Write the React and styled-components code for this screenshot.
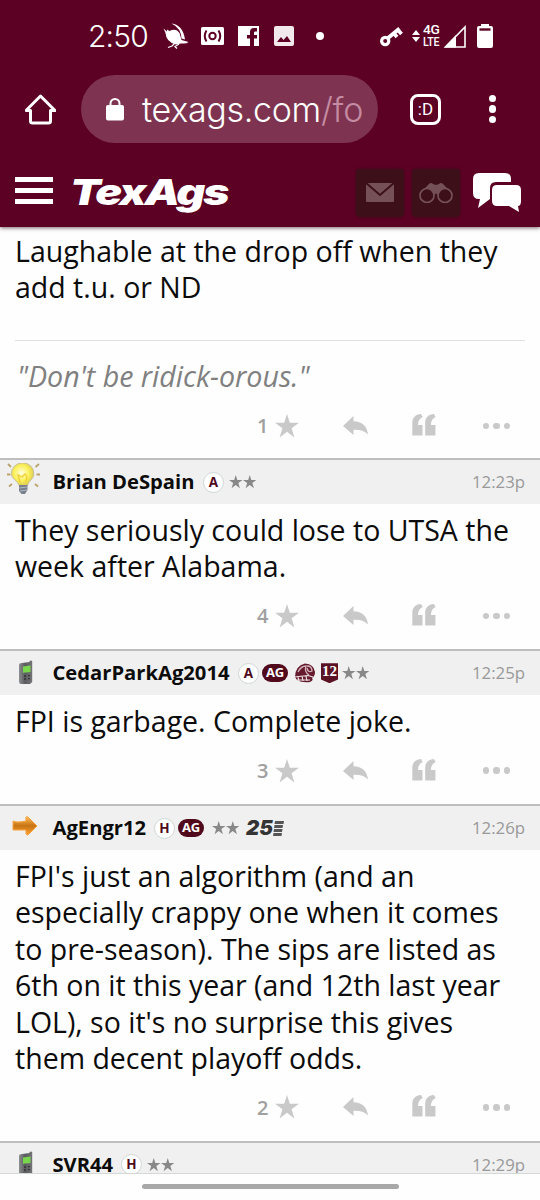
import React from "react";
import styled, { createGlobalStyle } from "styled-components";

const Global = createGlobalStyle`
  * { box-sizing: border-box; }
  html, body { margin: 0; padding: 0; background: #fff; overflow: hidden; }
  svg { display: block; flex: none; }
`;

const Screen = styled.div`
  width: 540px;
  height: 1200px;
  overflow: hidden;
  display: flex;
  flex-direction: column;
  background: #fefefe;
  color: #0c0c0c;
  font-family: "Open Sans", sans-serif;
`;

const Top = styled.header`
  flex: none;
  height: 227px;
  background: #5c0024;
  color: #fff;
  box-shadow: 0 1px 4px rgba(30, 0, 10, 0.6);
  z-index: 1;
`;

const StatusBar = styled.div`
  height: 72px;
  padding: 0 40px 0 88px;
  display: flex;
  align-items: center;
`;

const Clock = styled.span`
  width: 61px;
  font: 300 30px/36px Inter, "Liberation Sans", sans-serif;
  letter-spacing: -0.8px;
  white-space: nowrap;
`;

const StatusIcon = styled.span`
  display: flex;
  flex: none;
  margin-left: ${(p) => p.$gap}px;
`;

const Network = styled.span`
  margin-left: 3px;
  width: 18px;
  display: flex;
  flex-direction: column;
`;

const NetworkLine = styled.span`
  font: 500 13px/12px Roboto, sans-serif;
  letter-spacing: -0.3px;
  transform: scaleX(${(p) => p.$stretch});
  transform-origin: left;
`;

const UrlBar = styled.div`
  height: 74px;
  padding: 0 40px 0 25px;
  display: flex;
  align-items: center;
`;

const Address = styled.div`
  width: 297px;
  height: 68px;
  margin: 0 32px 0 25px;
  padding-left: 25px;
  border-radius: 34px;
  background: #7e3450;
  display: flex;
  align-items: center;
`;

const Url = styled.span`
  margin-left: 18px;
  padding-top: 1px;
  font: 300 34px/44px Inter, "Liberation Sans", sans-serif;
  letter-spacing: -0.3px;
  white-space: nowrap;
`;

const Path = styled.span`
  color: #c58ba2;
`;

const Tabs = styled.div`
  width: 31px;
  height: 31px;
  border: 3px solid #fff;
  border-radius: 8px;
  display: flex;
  align-items: center;
  justify-content: center;
  font: 400 17px/20px Roboto, sans-serif;
`;

const Kebab = styled.div`
  margin-left: auto;
  width: 15px;
  display: flex;
  flex-direction: column;
  align-items: center;
  gap: 3px;
`;

const Dot = styled.i`
  display: block;
  width: ${(p) => p.$size}px;
  height: ${(p) => p.$size}px;
  border-radius: 50%;
  background: ${(p) => p.$color || "#fff"};
`;

const SiteNav = styled.nav`
  height: 81px;
  padding: 12px 0 0 15px;
  display: flex;
  align-items: center;
`;

const Burger = styled.div`
  flex: none;
  width: 38px;
  height: 27px;
  border-top: 5px solid #fff;
  border-bottom: 5px solid #fff;
  display: flex;
  align-items: center;
  margin-bottom: 5px;
  &::after {
    content: "";
    width: 100%;
    height: 5px;
    background: #fff;
  }
`;

const Logo = styled.div`
  flex: none;
  width: 158px;
  margin: 0 128px 0 17px;
  font: italic 900 35.5px/40px Inter, sans-serif;
  letter-spacing: -1.6px;
  transform: scaleX(1.26);
  transform-origin: left;
  white-space: nowrap;
`;

const NavTile = styled.div`
  flex: none;
  width: 48px;
  height: 48px;
  margin-right: 8px;
  border-radius: 4px;
  background: #3c0f19;
  box-shadow: 0 0 3px #3c0f19;
  color: #755157;
  display: flex;
  align-items: center;
  justify-content: center;
`;

const Feed = styled.main`
  flex: 1;
  min-height: 0;
  overflow: hidden;
  border-bottom: 1px solid #d4d8d6;
`;

const Bar = styled.div`
  height: 46px;
  border-top: 2px solid #bebebe;
  background: #f0f0f0;
  padding: 0 15px 1px 0;
  display: flex;
  align-items: center;
`;

const Avatar = styled.div`
  width: 52.5px;
  height: 43px;
  padding: ${(p) => p.$top}px 0 0 ${(p) => p.$left}px;
`;

const Name = styled.span`
  width: ${(p) => p.$w}px;
  padding-bottom: 1px;
  font-size: 20.2px;
  line-height: 28px;
  font-weight: 700;
  white-space: nowrap;
`;

const Badges = styled.div`
  flex: 1;
  padding: 1px 0 0 8.5px;
  display: flex;
  align-items: center;
`;

const Circle = styled.span`
  width: 21px;
  height: 21px;
  border-radius: 50%;
  border: 1px solid #d0d6d6;
  background: #fff;
  color: #4e0a1b;
  font: 700 13.5px/18px "Open Sans", sans-serif;
  text-align: center;
`;

const Pill = styled.span`
  width: 26px;
  height: 18px;
  margin-left: 3px;
  border-radius: 9px;
  background: #500a1c;
  color: #fff;
  font: 700 13px/17.5px "Open Sans", sans-serif;
  letter-spacing: -0.3px;
  text-align: center;
`;

const Spaced = styled.span`
  display: flex;
  margin-left: ${(p) => p.$gap}px;
`;

const Time = styled.span`
  font-size: 16.8px;
  color: #999;
`;

const Body = styled.p`
  margin: 0;
  padding: ${(p) => p.$top}px 0 0 15px;
  font-size: 28.5px;
  line-height: 36.4px;
  white-space: pre;
`;

const Signature = styled.div`
  margin: 34px 15px 0;
  padding: 16.5px 0 0 2px;
  border-top: 1px solid #e0e0e0;
  font-size: 28.6px;
  line-height: 38px;
  font-style: italic;
  color: #808080;
`;

const Actions = styled.div`
  height: ${(p) => p.$h}px;
  padding: ${(p) => p.$top}px 30px 0 0;
  display: flex;
  align-items: flex-start;
  justify-content: flex-end;
  gap: 44px;
  color: #c9c9c9;
`;

const Rating = styled.span`
  display: flex;
  align-items: center;
  gap: 6px;
  height: 26px;
  font-size: 20px;
  font-weight: 600;
  color: #a0a0a0;
`;

const Dots = styled.span`
  height: 26px;
  margin-left: 3px;
  display: flex;
  align-items: center;
  gap: 4px;
`;

const HomeIndicator = styled.footer`
  flex: none;
  height: 26px;
  display: flex;
  justify-content: center;
  padding-top: 10px;
  &::after {
    content: "";
    width: 257px;
    height: 5px;
    border-radius: 3px;
    background: #a8a8a8;
  }
`;

const starPath = "M12 0L14.8 8.8H24L16.6 14.2L19.4 23.4L12 17.8L4.6 23.4L7.4 14.2L0 8.8H9.2Z";
const Star = ({ size = 24, color = "#c9c9c9" }) => (
  <svg width={size} height={size} viewBox="0 0 24 24" fill={color}><path d={starPath} /></svg>
);
const Stars = ({ gap }) => (
  <Spaced $gap={gap}><Star size={13.5} color="#888" /><Star size={13.5} color="#888" /></Spaced>
);

const ReplyIcon = () => (
  <svg width="25" height="26" viewBox="0 0 25 26" fill="currentColor">
    <path d="M0 13L10.5 3V8.3C19 8.6 24 13 25 21.5C21.2 17.6 16.5 16.5 10.5 16.8V22Z" />
  </svg>
);
const QuoteIcon = () => (
  <svg width="24" height="26" viewBox="0 0 24 26" fill="currentColor">
    <path d="M.3 22.5V10C.3 4.5 3.5 1.5 9 1L10.7 4C7.7 5.5 6 8 6 12H10.5V22.5Z" />
    <path d="M13.2 22.5V10C13.2 4.5 16.4 1.5 21.9 1L23.6 4C20.6 5.5 18.9 8 18.9 12H23.4V22.5Z" />
  </svg>
);

const PostActions = ({ count, top = 18, h = 64.4 }) => (
  <Actions $top={top} $h={h}>
    <Rating>{count}<Star /></Rating>
    <ReplyIcon />
    <QuoteIcon />
    <Dots><Dot $size={6.5} $color="#c9c9c9" /><Dot $size={6.5} $color="#c9c9c9" /><Dot $size={6.5} $color="#c9c9c9" /></Dots>
  </Actions>
);

const Bulb = () => (
  <svg width="34" height="32" viewBox="0 0 34 32">
    <defs>
      <radialGradient id="glow" cx=".45" cy=".45" r=".6">
        <stop offset="0" stopColor="#fffde0" /><stop offset=".55" stopColor="#fbf15c" /><stop offset="1" stopColor="#d9c44e" />
      </radialGradient>
    </defs>
    <path d="M1 1L4 4M32 1L28.5 4M0 11.5H3.5M29.5 11.5H33M2 23.5L5 21M31 23.5L28 21" stroke="#b9a46c" strokeWidth="1.8" />
    <path d="M4.5 11A11.2 10.2 0 1 1 26.8 11C26.8 16 21.5 18 20.5 22.5H12C11 18 4.5 16 4.5 11Z" fill="url(#glow)" stroke="#c8c19b" />
    <path d="M13 19L11 12L15 14L18 11L20 14L18.5 19" stroke="#f0ce32" fill="none" strokeWidth="1.3" />
    <path d="M12 22H20.5V27L18 31H14.5L12 28Z" fill="#77808c" />
    <path d="M12 25L20 24M13 28L20 27" stroke="#aeb6bf" />
  </svg>
);
const Phone = () => (
  <svg width="16" height="25" viewBox="0 0 16 25">
    <defs><linearGradient id="case"><stop stopColor="#8d9091" /><stop offset=".45" stopColor="#5a5b5e" /><stop offset="1" stopColor="#747476" /></linearGradient></defs>
    <path d="M11.5 1Q13 0 14.2 1V22L12 24H3Q1 24 1 21V5Q1 3 4 3L11.5 2Z" fill="url(#case)" />
    <path d="M5 6.5L12.5 5.5V12L5 12.8Z" fill="#78d74d" />
    <path d="M6 16H8M10 15.7H12M6 19H8M10 18.7H12" stroke="#343437" strokeWidth="1.3" />
  </svg>
);
const Arrow = () => (
  <svg width="26" height="22" viewBox="0 0 26 22">
    <defs><linearGradient id="orange" x2="0" y2="1"><stop stopColor="#ffbd57" /><stop offset=".5" stopColor="#c77414" /><stop offset="1" stopColor="#ffa333" /></linearGradient></defs>
    <path d="M1 6Q4 8 14 6V2Q15 1 17 3L25 11L17 19Q15 21 14 19V15H1Z" fill="url(#orange)" stroke="#f4a13e" />
  </svg>
);
const Helmet = () => (
  <svg width="21" height="20" viewBox="0 0 21 20">
    <path d="M1 14Q1 3 11 .5Q20 1 21 9Q21 13 18 15Q20 17 16 19Q8 20 3 17Z" fill="#651b2d" />
    <path d="M4 9Q7 3 12 3Q10 9 15 12M13 3Q18 3 18 8Q14 10 13 5" stroke="#d5b5bc" fill="none" strokeWidth="1.3" />
    <path d="M0 14L14 12.5L19 14M4 14L5 18M8 13L9 18M12 13L13 18M3 17H16" stroke="#eee2e4" fill="none" strokeWidth="1.2" />
  </svg>
);
const ShieldFrame = styled.span`
  width: 17px;
  height: 20px;
  margin-left: 6px;
  background: #5c1225;
  clip-path: polygon(0 0, 100% 0, 100% 82%, 50% 100%, 0 82%);
  color: #fff;
  font: 700 15px/17px "Liberation Serif", serif;
  text-align: center;
`;
const Anniversary = styled.span`
  display: flex;
  align-items: center;
  margin-left: 7px;
  color: #343434;
  font: italic 900 20.5px/20px Inter, sans-serif;
`;

const PostBar = ({ avatar, left, top, name, w, time, children }) => (
  <Bar>
    <Avatar $left={left} $top={top}>{avatar}</Avatar>
    <Name $w={w}>{name}</Name>
    <Badges>{children}</Badges>
    <Time>{time}</Time>
  </Bar>
);

export default function App() {
  return (
    <Screen>
      <Global />
      <Top>
        <StatusBar>
          <Clock>2:50</Clock>
          <StatusIcon $gap={14}>
            <svg width="27" height="27" viewBox="0 0 27 27" fill="#fff">
              <path d="M.5 5.500L4 8.500L4 6.500L6.500 8Q13 4.500 16.500 10L18.500 17L25.500 19Q24 21 18 20.500L13 21.500Q3 19 2.500 10Z" />
              <path d="M8.500 .5Q20 2 22 16.500L18.500 15.500Q18 5 8.500 .5Z" />
              <path d="M12 20L9 23L5 24.500M16 21L12 23.500L14 25.500" stroke="#fff" strokeWidth="1.3" fill="none" />
            </svg>
          </StatusIcon>
          <StatusIcon $gap={11}>
            <svg width="23" height="18" viewBox="0 0 23 18">
              <rect width="23" height="18" rx="1.5" fill="#fff" />
              <g stroke="#5c0024" fill="none" strokeWidth="2"><circle cx="11.5" cy="9" r="3.2" /><path d="M5.5 3.5Q2 9 5.5 14.5M17.5 3.5Q21 9 17.5 14.5" /></g>
            </svg>
          </StatusIcon>
          <StatusIcon $gap={14}>
            <svg width="21" height="20" viewBox="0 0 21 20">
              <path fill="#fff" d="M0 0H21V20H16V12.5H19V9H16V6.8Q16 5.5 17.5 5.5H19V2H16Q12 2 12 6V9H9V12.5H12V20H0Z" />
            </svg>
          </StatusIcon>
          <StatusIcon $gap={15}>
            <svg width="20" height="20" viewBox="0 0 20 20"><rect width="20" height="20" rx="2" fill="#f2e9ed" /><path d="M3 16L7 11L9.5 14L13 10L17 16Z" fill="#5c0024" /></svg>
          </StatusIcon>
          <StatusIcon $gap={22}><Dot $size={8} /></StatusIcon>
          <StatusIcon $gap={56}>
            <svg width="23" height="21" viewBox="0 0 23 21" fill="none" stroke="#fff">
              <circle cx="5.2" cy="15" r="3.6" strokeWidth="3.2" /><path d="M8 12L19.5 2.5M14 7.5L17 11M18 4L21.5 8" strokeWidth="3.8" />
            </svg>
          </StatusIcon>
          <StatusIcon $gap={9}>
            <svg width="8" height="12" viewBox="0 0 8 12" fill="#fff"><path d="M0 5L4 0L8 5ZM0 7H8L4 12Z" /></svg>
          </StatusIcon>
          <Network>
            <NetworkLine $stretch={1.06}>4G</NetworkLine>
            <NetworkLine $stretch={0.82}>LTE</NetworkLine>
          </Network>
          <StatusIcon $gap={2}>
            <svg width="23" height="23" viewBox="0 0 23 23"><path d="M2.5 22L22 2V22Z" fill="none" stroke="#fff" strokeWidth="1.6" /><path d="M1 22.5L13 10V22.5Z" fill="#fff" /></svg>
          </StatusIcon>
          <StatusIcon $gap={11}>
            <svg width="16" height="24" viewBox="0 0 16 24"><path d="M4 0H12V2H14Q16 2 16 4V22Q16 24 14 24H2Q0 24 0 22V4Q0 2 2 2H4Z" fill="#fff" /><path d="M2.5 5.5H13.5" stroke="#5c0024" strokeWidth="2.4" /></svg>
          </StatusIcon>
        </StatusBar>
        <UrlBar>
          <svg width="31" height="31" viewBox="0 0 31 31" fill="none" stroke="#fff" strokeWidth="3" strokeLinejoin="round"><path d="M1 16.5H5.5V27Q5.5 29 7.5 29H23.5Q25.5 29 25.5 27V16.5H30L15.5 2Z" /></svg>
          <Address>
            <svg width="18" height="23" viewBox="0 0 18 23"><rect y="7" width="18" height="15.5" rx="2" fill="#fff" /><path d="M4.5 8V5.5A4.5 4.5 0 0 1 13.5 5.5V8" stroke="#fff" strokeWidth="2" fill="none" /></svg>
            <Url>texags.com<Path>/fo</Path></Url>
          </Address>
          <Tabs>:D</Tabs>
          <Kebab><Dot $size={7.5} /><Dot $size={7.5} /><Dot $size={7.5} /></Kebab>
        </UrlBar>
        <SiteNav>
          <Burger />
          <Logo>TexAgs</Logo>
          <NavTile>
            <svg width="28" height="19" viewBox="0 0 28 19"><rect width="28" height="19" rx="1" fill="currentColor" /><path d="M0 0L14 12L28 0" fill="none" stroke="#3c0f19" strokeWidth="2" /></svg>
          </NavTile>
          <NavTile>
            <svg width="34" height="22" viewBox="0 0 34 22" fill="none" stroke="currentColor" strokeWidth="1.7">
              <path d="M3 9L10 2Q12 0 14 2L17 3L20 2Q22 0 24 2L31 9L20 14Q17 9 14 14Z" fill="currentColor" stroke="none" />
              <circle cx="8" cy="13.5" r="7" fill="#3c0f19" /><circle cx="26" cy="13.5" r="7" fill="#3c0f19" />
            </svg>
          </NavTile>
          <StatusIcon $gap={5}>
            <svg width="49" height="40" viewBox="0 0 49 40" fill="#fff">
              <path d="M6 0H32Q38 0 38 6V9H23Q17 9 17 15V26L5 35L7 26H6Q0 26 0 20V6Q0 0 6 0Z" />
              <path d="M24 12H43Q48 12 48 17V28Q48 33 45 33L46 39L36 33H24Q19 33 19 28V17Q19 12 24 12Z" />
            </svg>
          </StatusIcon>
        </SiteNav>
      </Top>
      <Feed>
        <Body $top={6}>{"Laughable at the drop off when they\nadd t.u. or ND"}</Body>
        <Signature>"Don't be ridick-orous."</Signature>
        <PostActions count="1" top={17.5} h={62.7} />
        <PostBar avatar={<Bulb />} left={7} top={3} name="Brian DeSpain" w={142} time="12:23p"><Circle>A</Circle><Stars gap={5} /></PostBar>
        <Body $top={8}>{"They seriously could lose to UTSA the\nweek after Alabama."}</Body>
        <PostActions count="4" />
        <PostBar avatar={<Phone />} left={18} top={9} name="CedarParkAg2014" w={177} time="12:25p">
          <Circle>A</Circle><Pill>AG</Pill><Spaced $gap={6}><Helmet /></Spaced><ShieldFrame>12</ShieldFrame><Stars gap={4} />
        </PostBar>
        <Body $top={8}>FPI is garbage. Complete joke.</Body>
        <PostActions count="3" />
        <PostBar avatar={<Arrow />} left={12} top={9} name="AgEngr12" w={93} time="12:26p">
          <Circle>H</Circle><Pill>AG</Pill><Stars gap={8} />
          <Anniversary>25<svg width="11" height="15" viewBox="0 0 11 15" fill="#555"><path d="M2 0H11L10.5 3H1.5ZM1.5 4H10L9.5 7H1ZM1 8H9.5L9 11H.5ZM.5 12H9L8.5 15H0Z" /></svg></Anniversary>
        </PostBar>
        <Body $top={8}>{"FPI's just an algorithm (and an\nespecially crappy one when it comes\nto pre-season). The sips are listed as\n6th on it this year (and 12th last year\nLOL), so it's no surprise this gives\nthem decent playoff odds."}</Body>
        <PostActions count="2" />
        <PostBar avatar={<Phone />} left={18} top={8} name="SVR44" w={60} time="12:29p"><Circle>H</Circle><Stars gap={5} /></PostBar>
      </Feed>
      <HomeIndicator />
    </Screen>
  );
}
